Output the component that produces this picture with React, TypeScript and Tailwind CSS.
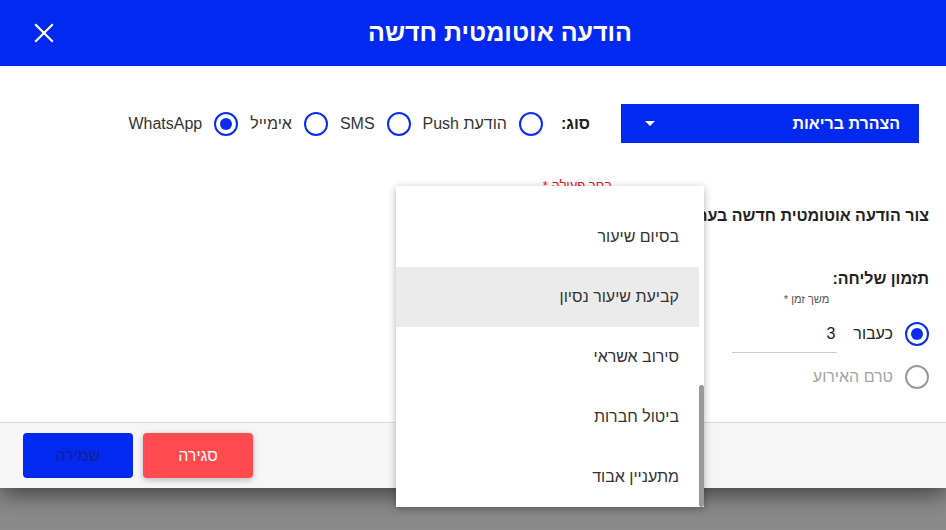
import React from "react";

const font = { fontFamily: '"Liberation Sans", "DejaVu Sans", sans-serif' };

const Radio = ({ checked, muted }: { checked?: boolean; muted?: boolean }) => (
  <span
    className={`flex h-6 w-6 shrink-0 items-center justify-center rounded-full border-2 ${
      muted ? "border-[#9a9a9a]" : "border-[#0a2bf0]"
    }`}
  >
    {checked && <span className="h-3 w-3 rounded-full bg-[#0a2bf0]" />}
  </span>
);

const types = [
  { label: "הודעת Push", checked: false },
  { label: "SMS", checked: false },
  { label: "אימייל", checked: false },
  { label: "WhatsApp", checked: true },
];

const actions = ["בסיום שיעור", "קביעת שיעור נסיון", "סירוב אשראי", "ביטול חברות", "מתעניין אבוד"];

export default function App() {
  return (
    <div dir="rtl" style={font} className="relative h-[530px] w-[946px] overflow-hidden bg-[#8a8a8a] text-[#222]">
      {/* Dialog */}
      <div className="flex h-[488px] flex-col bg-white shadow-[0_6px_22px_rgba(0,0,0,0.55)]">
        {/* Header */}
        <header className="flex h-[66px] shrink-0 items-center bg-[#0229f0] text-white">
          <h1 className="flex-1 text-center text-[25px] font-bold">הודעה אוטומטית חדשה</h1>
          <button className="flex h-full w-[54px] items-center justify-start">
            <svg width="20" height="20" viewBox="0 0 20 20" stroke="white" strokeWidth="2.2" strokeLinecap="square">
              <line x1="2" y1="2" x2="18" y2="18" />
              <line x1="18" y1="2" x2="2" y2="18" />
            </svg>
          </button>
        </header>

        {/* Body */}
        <main className="flex-1 pr-[17px]">
          <div className="mt-[38px] flex items-center pr-[10px]">
            <div className="flex h-[39px] w-[298px] items-center justify-between bg-[#0229f0] pl-[24px] pr-[19px] text-[16px] font-bold text-white">
              <span>הצהרת בריאות</span>
              <svg width="10" height="5" viewBox="0 0 10 5">
                <polygon points="0,0 10,0 5,5" fill="white" />
              </svg>
            </div>
            <span className="mr-[31px] text-[16px] font-bold">סוג:</span>
            <div className="mr-[18px] flex items-center gap-3">
              {types.map((t) => (
                <label key={t.label} className="flex items-center gap-3 text-[16px] text-[#333]">
                  <Radio checked={t.checked} />
                  <span>{t.label}</span>
                </label>
              ))}
            </div>
          </div>

          <div className="mt-[35px] flex items-start">
            <span className="mt-[27px] text-[16px] font-bold leading-[22px]">צור הודעה אוטומטית חדשה בעת</span>
            <div className="mr-[84px] flex w-[260px] flex-col">
              <span className="text-[13px] leading-4 text-[#e11]">בחר פעולה *</span>
            </div>
          </div>

          <div className="mt-[40px] text-[16px] font-bold leading-6">תזמון שליחה:</div>
          <div className="flex items-start">
            <div className="mt-[31px] flex items-center">
              <Radio checked />
              <span className="mr-[12px] text-[16px] leading-6">כעבור</span>
            </div>
            <div className="mr-[16px] flex w-[105px] flex-col">
              <span className="mr-[8px] text-[11px] leading-4 text-[#555]">משך זמן *</span>
              <span className="mt-[15px] border-b border-[#ccc] pb-[6px] pr-[2px] text-[16px] leading-6">3</span>
            </div>
          </div>
          <div className="mt-[12px] flex items-center">
            <Radio muted />
            <span className="mr-[12px] text-[16px] text-[#a4a4a4]">טרם האירוע</span>
          </div>
        </main>

        {/* Footer */}
        <footer className="flex h-[66px] shrink-0 items-center justify-end gap-[10px] border-t border-[#dcdcdc] bg-[#f6f6f6] pl-[23px]">
          <button className="h-[45px] w-[110px] rounded bg-[#ff4a4f] text-[16px] text-white shadow-[0_2px_6px_rgba(0,0,0,0.25)]">
            סגירה
          </button>
          <button className="h-[45px] w-[110px] rounded bg-[#0229f0] text-[16px] text-[#14218a]">שמירה</button>
        </footer>
      </div>

      {/* Open dropdown menu */}
      <div
        dir="ltr"
        className="absolute left-[396px] top-[186px] flex h-[321px] w-[308px] bg-white shadow-[0_2px_8px_rgba(0,0,0,0.3)]"
      >
        <ul dir="rtl" className="flex-1 pt-[21px]">
          {actions.map((a, i) => (
            <li
              key={a}
              className={`flex h-[60px] items-center pr-[20px] text-[16px] text-[#333] ${i === 1 ? "bg-[#ebebeb]" : ""}`}
            >
              {a}
            </li>
          ))}
        </ul>
        <div className="flex w-[5px] flex-col justify-end">
          <div className="h-[122px] rounded-full bg-[#999]" />
        </div>
      </div>
    </div>
  );
}
